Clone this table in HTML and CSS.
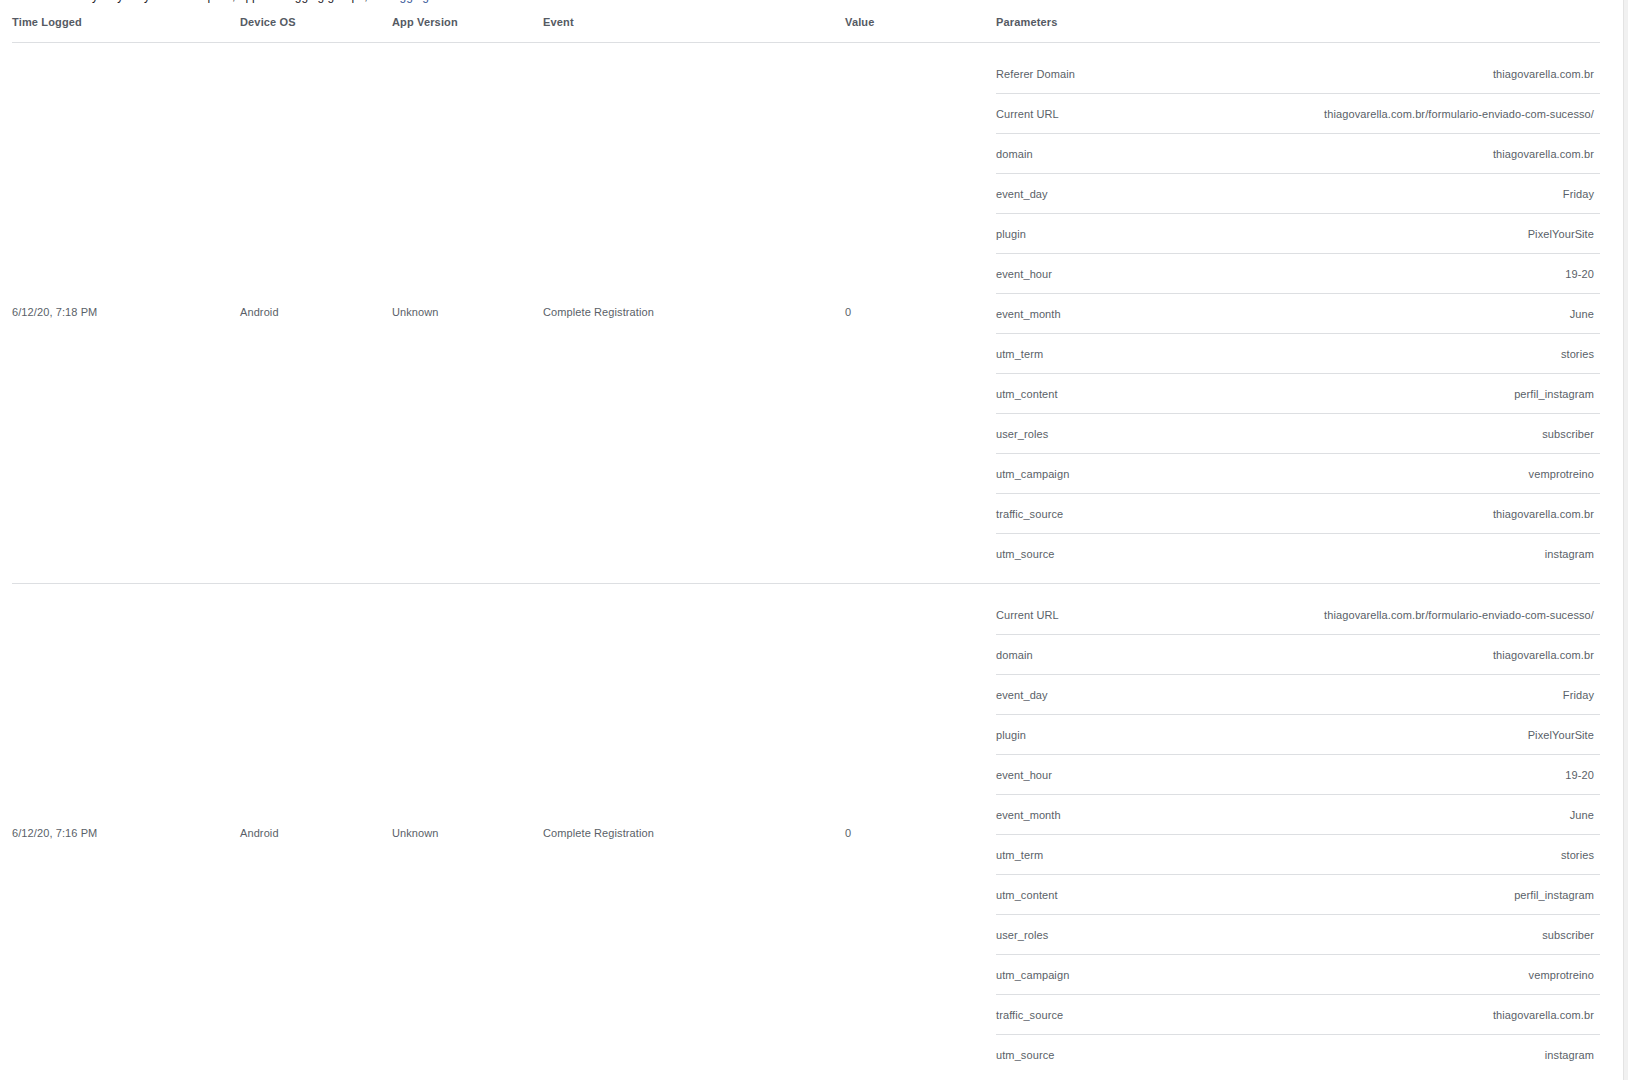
FILE: index.html
```html
<!DOCTYPE html>
<html>
<head>
<meta charset="utf-8">
<link rel="stylesheet" href="styles.css">
</head>
<body>
<div class="page">
  <main class="main">
    <div class="clip-line"><div class="clip-inner">Activity only for your recent pixel, app and logging groups, <span class="link">Debugging</span> <span class="ext"></span></div></div>
    <table class="log">
      <colgroup>
        <col class="c1"><col class="c2"><col class="c3"><col class="c4"><col class="c5"><col class="c6">
      </colgroup>
      <thead>
        <tr>
          <th>Time Logged</th>
          <th>Device OS</th>
          <th>App Version</th>
          <th>Event</th>
          <th>Value</th>
          <th>Parameters</th>
        </tr>
      </thead>
      <tbody>
        <tr>
          <td>6/12/20, 7:18 PM</td>
          <td>Android</td>
          <td>Unknown</td>
          <td>Complete Registration</td>
          <td>0</td>
          <td class="params">
            <div class="param"><span>Referer Domain</span><span>thiagovarella.com.br</span></div>
            <div class="param"><span>Current URL</span><span>thiagovarella.com.br/formulario-enviado-com-sucesso/</span></div>
            <div class="param"><span>domain</span><span>thiagovarella.com.br</span></div>
            <div class="param"><span>event_day</span><span>Friday</span></div>
            <div class="param"><span>plugin</span><span>PixelYourSite</span></div>
            <div class="param"><span>event_hour</span><span>19-20</span></div>
            <div class="param"><span>event_month</span><span>June</span></div>
            <div class="param"><span>utm_term</span><span>stories</span></div>
            <div class="param"><span>utm_content</span><span>perfil_instagram</span></div>
            <div class="param"><span>user_roles</span><span>subscriber</span></div>
            <div class="param"><span>utm_campaign</span><span>vemprotreino</span></div>
            <div class="param"><span>traffic_source</span><span>thiagovarella.com.br</span></div>
            <div class="param"><span>utm_source</span><span>instagram</span></div>
          </td>
        </tr>
        <tr>
          <td>6/12/20, 7:16 PM</td>
          <td>Android</td>
          <td>Unknown</td>
          <td>Complete Registration</td>
          <td>0</td>
          <td class="params">
            <div class="param"><span>Current URL</span><span>thiagovarella.com.br/formulario-enviado-com-sucesso/</span></div>
            <div class="param"><span>domain</span><span>thiagovarella.com.br</span></div>
            <div class="param"><span>event_day</span><span>Friday</span></div>
            <div class="param"><span>plugin</span><span>PixelYourSite</span></div>
            <div class="param"><span>event_hour</span><span>19-20</span></div>
            <div class="param"><span>event_month</span><span>June</span></div>
            <div class="param"><span>utm_term</span><span>stories</span></div>
            <div class="param"><span>utm_content</span><span>perfil_instagram</span></div>
            <div class="param"><span>user_roles</span><span>subscriber</span></div>
            <div class="param"><span>utm_campaign</span><span>vemprotreino</span></div>
            <div class="param"><span>traffic_source</span><span>thiagovarella.com.br</span></div>
            <div class="param"><span>utm_source</span><span>instagram</span></div>
          </td>
        </tr>
      </tbody>
    </table>
  </main>
  <div class="scrollbar"></div>
</div>
</body>
</html>
```

FILE: styles.css
```css
* { box-sizing: border-box; }

html, body {
  margin: 0;
  padding: 0;
  background: #ffffff;
  height: 100%;
  overflow: hidden;
}

body {
  font-family: "Liberation Sans", Arial, sans-serif;
  font-size: 11px;
  color: #5a5f68;
}

.page {
  display: flex;
  height: 1080px;
}

.main {
  flex: 1;
  padding-left: 12px;
  overflow: hidden;
}

.scrollbar {
  width: 5px;
  background: #f1f1f1;
  border-left: 1px solid #e3e3e3;
}

.clip-line {
  height: 3px;
  overflow: hidden;
}

.clip-inner {
  margin-top: -11px;
  margin-left: 48px;
  font-size: 12px;
  line-height: 14px;
  white-space: nowrap;
  color: #1d2129;
}

.link {
  color: #385898;
}

.ext {
  display: inline-block;
  width: 9px;
  height: 9px;
  border-bottom: 2px solid #385898;
}

.log {
  width: 1588px;
  table-layout: fixed;
  border-collapse: collapse;
}

.c1 { width: 228px; }
.c2 { width: 152px; }
.c3 { width: 151px; }
.c4 { width: 302px; }
.c5 { width: 151px; }
.c6 { width: 604px; }

.log th {
  text-align: left;
  font-weight: bold;
  font-size: 11px;
  line-height: 14px;
  letter-spacing: 0.15px;
  padding: 12px 0 13px;
  border-bottom: 1px solid #dddfe2;
  color: #555a63;
}

.log td {
  vertical-align: middle;
  line-height: 14px;
  letter-spacing: 0.1px;
  padding: 0 0 2px;
  border-bottom: 1px solid #dddfe2;
  color: #5a5f68;
  white-space: nowrap;
}

.log td.params {
  padding: 11px 0 10px;
}

.param {
  display: flex;
  justify-content: space-between;
  align-items: center;
  height: 40px;
  padding-right: 6px;
  border-bottom: 1px solid #dddfe2;
}

.param:last-child {
  border-bottom: none;
  height: 39px;
}
```
